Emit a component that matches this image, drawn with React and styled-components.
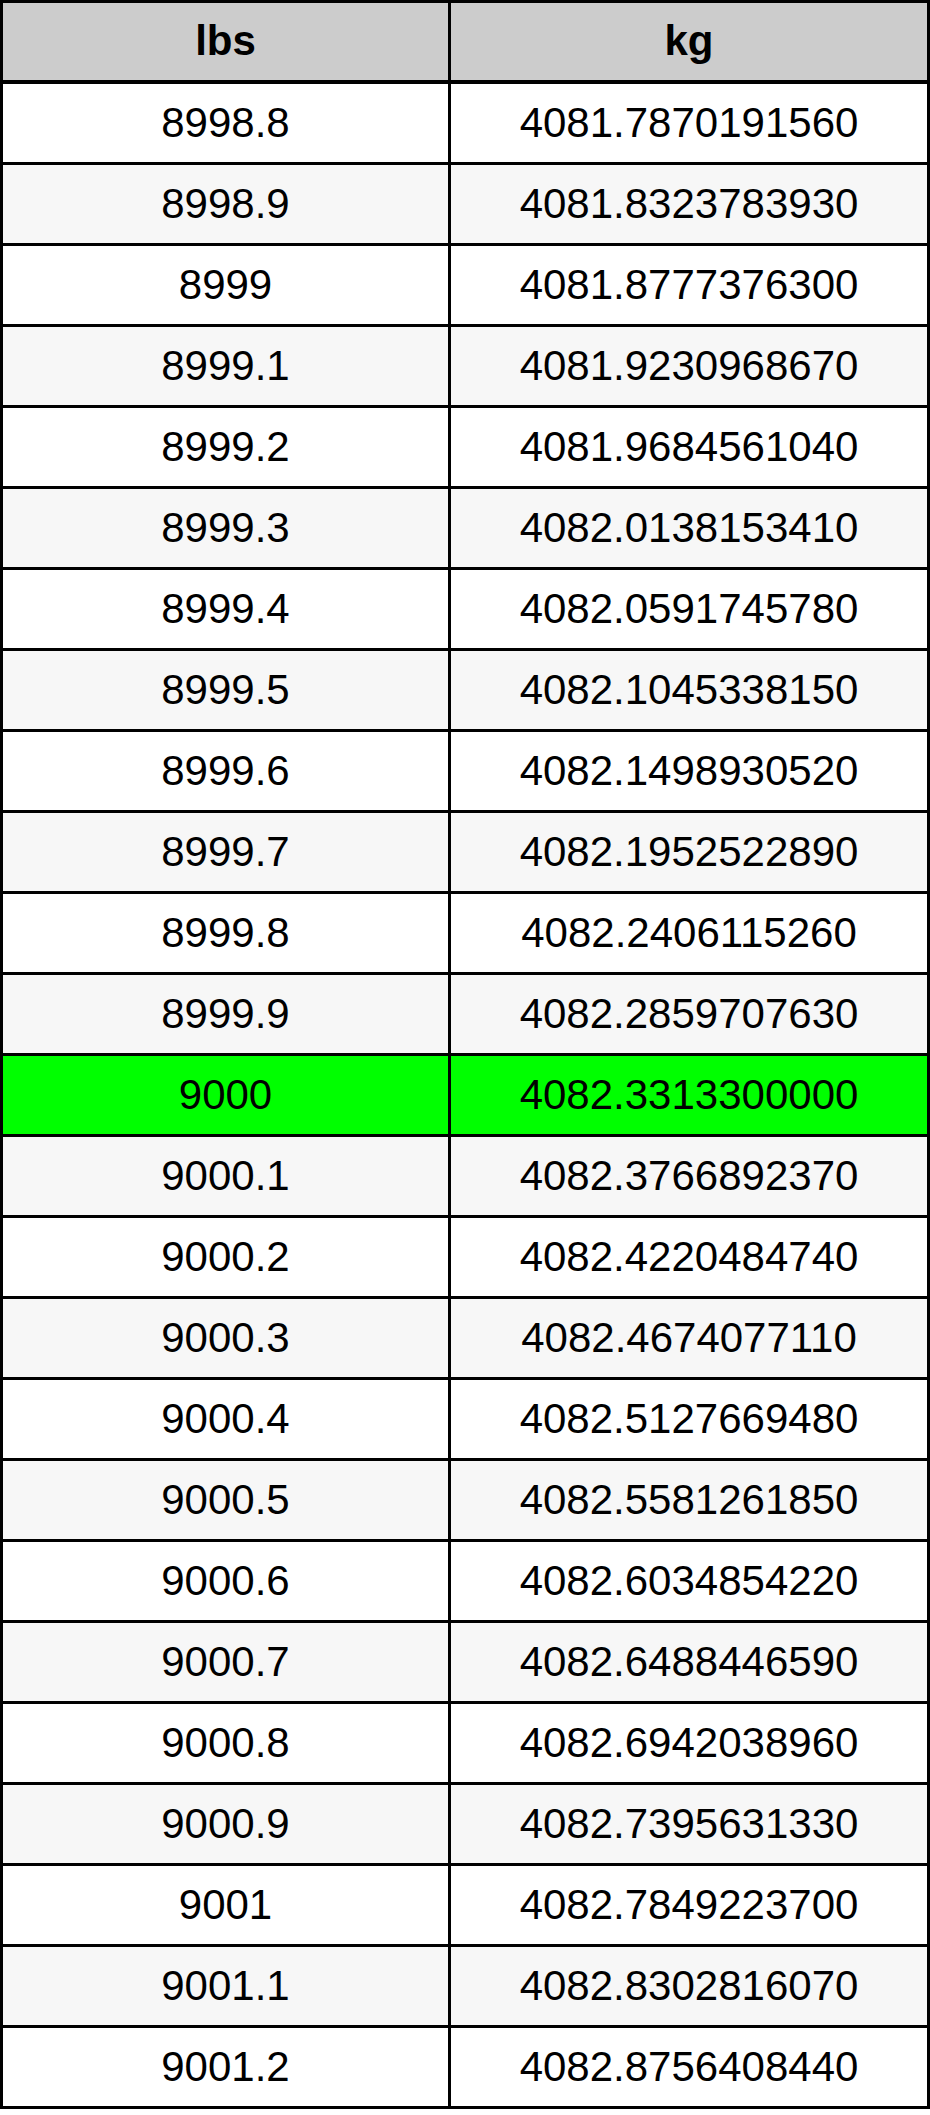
import React from "react";
import styled, { createGlobalStyle } from "styled-components";

const GlobalStyle = createGlobalStyle`
  html, body {
    margin: 0;
    padding: 0;
    background: #ffffff;
  }
  body {
    font-family: "Liberation Sans", Arial, sans-serif;
  }
`;

const Table = styled.div`
  display: grid;
  grid-template-columns: 445px 476px;
  grid-auto-rows: 78px;
  gap: 3px;
  padding: 3px;
  width: 930px;
  box-sizing: border-box;
  background: #000000;
  font-family: "Liberation Sans", Arial, sans-serif;
  font-size: 42px;
  color: #000000;
`;

const HeaderCell = styled.div`
  display: flex;
  align-items: center;
  justify-content: center;
  background: #cccccc;
  font-weight: bold;
  height: 77px;
  margin-bottom: 1px;
  padding-bottom: 1px;
  box-sizing: border-box;
`;

const Cell = styled.div`
  display: flex;
  align-items: center;
  justify-content: center;
  background: ${(p) => (p.$highlight ? "#00ff00" : p.$alt ? "#f7f7f7" : "#ffffff")};
`;

const rows = [
  ["8998.8", "4081.7870191560"],
  ["8998.9", "4081.8323783930"],
  ["8999", "4081.8777376300"],
  ["8999.1", "4081.9230968670"],
  ["8999.2", "4081.9684561040"],
  ["8999.3", "4082.0138153410"],
  ["8999.4", "4082.0591745780"],
  ["8999.5", "4082.1045338150"],
  ["8999.6", "4082.1498930520"],
  ["8999.7", "4082.1952522890"],
  ["8999.8", "4082.2406115260"],
  ["8999.9", "4082.2859707630"],
  ["9000", "4082.3313300000"],
  ["9000.1", "4082.3766892370"],
  ["9000.2", "4082.4220484740"],
  ["9000.3", "4082.4674077110"],
  ["9000.4", "4082.5127669480"],
  ["9000.5", "4082.5581261850"],
  ["9000.6", "4082.6034854220"],
  ["9000.7", "4082.6488446590"],
  ["9000.8", "4082.6942038960"],
  ["9000.9", "4082.7395631330"],
  ["9001", "4082.7849223700"],
  ["9001.1", "4082.8302816070"],
  ["9001.2", "4082.8756408440"],
];

export default function App() {
  return (
    <>
      <GlobalStyle />
      <Table>
        <HeaderCell>lbs</HeaderCell>
        <HeaderCell>kg</HeaderCell>
        {rows.map(([lbs, kg], i) => {
          const highlight = lbs === "9000";
          const alt = i % 2 === 1;
          return (
            <React.Fragment key={lbs}>
              <Cell $alt={alt} $highlight={highlight}>{lbs}</Cell>
              <Cell $alt={alt} $highlight={highlight}>{kg}</Cell>
            </React.Fragment>
          );
        })}
      </Table>
    </>
  );
}
